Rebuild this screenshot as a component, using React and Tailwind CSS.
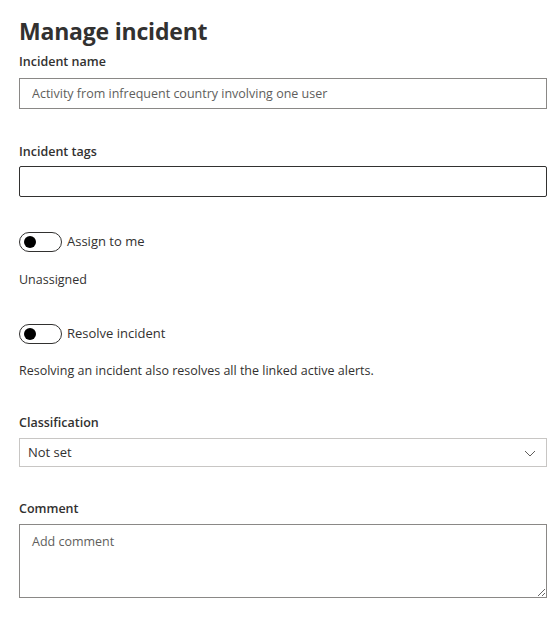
import React, { useState } from 'react'

const font = { fontFamily: '"Open Sans", "Noto Sans", sans-serif' }

const Toggle = ({ label, on, setOn }) => (
  <div className="flex items-center h-5">
    <button
      type="button"
      onClick={() => setOn(!on)}
      className={`relative w-[43px] h-5 rounded-full border border-[#323130] ${on ? 'bg-[#0078d4] border-[#0078d4]' : 'bg-white'}`}
    >
      <span
        className={`absolute top-[3px] w-3 h-3 rounded-full ${on ? 'left-[26px] bg-white' : 'left-[4px] bg-black'}`}
      />
    </button>
    <span className="ml-[5px] text-[13px] text-[#323130]">{label}</span>
  </div>
)

export default function App() {
  const [assign, setAssign] = useState(false)
  const [resolve, setResolve] = useState(false)

  return (
    <div className="w-[560px] h-[636px] bg-white px-[19px] pt-[15px] text-[#323130]" style={font}>
      <h1 className="text-[23px] font-bold leading-[32px] tracking-[-0.2px]">Manage incident</h1>

      {/* Incident name */}
      <label className="block mt-[5px] text-[12.5px] font-semibold leading-[20px]">Incident name</label>
      <input
        type="text"
        defaultValue="Activity from infrequent country involving one user"
        className="mt-[6px] block w-[528px] h-[31px] border border-[#8a8886] px-3 text-[12.5px] text-[#605e5c] outline-none"
      />

      {/* Incident tags */}
      <label className="block mt-[33px] text-[12.5px] font-semibold leading-[20px]">Incident tags</label>
      <input
        type="text"
        className="mt-[4px] block w-[528px] h-[31px] border border-[#323130] rounded-[2px] px-3 text-[13px] outline-none"
      />

      <div className="mt-[35px]">
        <Toggle label="Assign to me" on={assign} setOn={setAssign} />
      </div>
      <p className="mt-[18px] text-[12.5px] leading-[20px]">Unassigned</p>

      <div className="mt-[34px]">
        <Toggle label="Resolve incident" on={resolve} setOn={setResolve} />
      </div>
      <p className="mt-[17px] text-[12.5px] leading-[20px]">
        Resolving an incident also resolves all the linked active alerts.
      </p>

      {/* Classification */}
      <label className="block mt-[32px] text-[12.5px] font-semibold leading-[20px]">Classification</label>
      <div className="mt-[5px] flex items-center justify-between w-[528px] h-[29px] border border-[#c8c6c4] pl-[8px] pr-[10px]">
        <span className="text-[13px]">Not set</span>
        <svg width="12" height="12" viewBox="0 0 12 12" fill="none">
          <path d="M1 4 L6 9 L11 4" stroke="#605e5c" strokeWidth="1" />
        </svg>
      </div>

      {/* Comment */}
      <label className="block mt-[32px] text-[12.5px] font-semibold leading-[20px]">Comment</label>
      <textarea
        placeholder="Add comment"
        className="mt-[5px] block w-[528px] h-[74px] border border-[#8a8886] px-3 pt-[8px] pb-[6px] text-[12.5px] placeholder:text-[#605e5c] outline-none resize-y"
      />
    </div>
  )
}
